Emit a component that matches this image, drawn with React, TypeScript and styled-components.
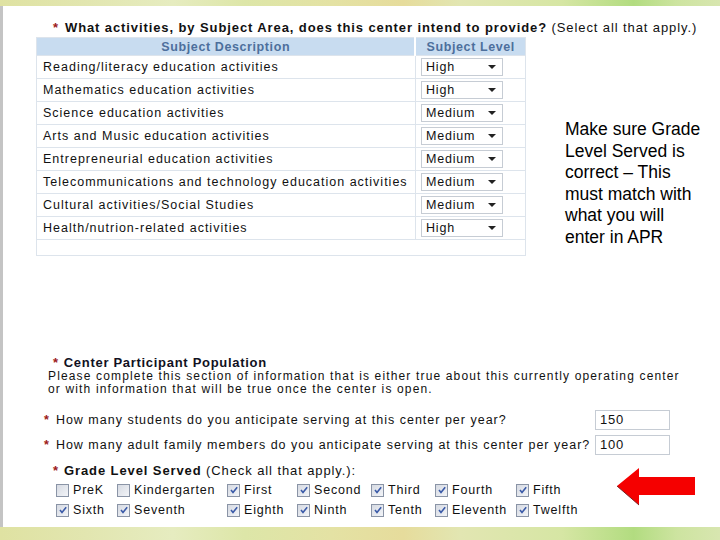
import styled, { createGlobalStyle } from "styled-components";

const GlobalStyle = createGlobalStyle`
  html, body {
    margin: 0;
    padding: 0;
    background: #ffffff;
  }
  body {
    font-family: "Liberation Sans", Arial, sans-serif;
  }
`;

const Slide = styled.div`
  width: 720px;
  height: 540px;
  display: flex;
  flex-direction: column;
  overflow: hidden;
  background: #ffffff;
`;

const Band = styled.div<{ $h: number }>`
  height: ${(p) => p.$h}px;
  flex-shrink: 0;
  background: linear-gradient(
    90deg,
    #dfe2a2 0%,
    #e2e6b0 12%,
    #e6ecc0 24%,
    #dde6a8 34%,
    #e4e2a4 46%,
    #e6dc9c 56%,
    #e2e6b2 64%,
    #d6e6a4 78%,
    #b2dc80 88%,
    #cde4a0 94%,
    #d8e6b0 100%
  );
`;

const Page = styled.div`
  flex: 1;
  border-left: 3px solid #c4c4c4;
  display: flex;
  flex-direction: column;
  color: #111111;
`;

const Star = styled.span<{ $gap?: number }>`
  color: #9c1a1a;
  font-weight: 700;
  margin-right: ${(p) => p.$gap ?? 5}px;
`;

const Question = styled.div`
  margin: 14px 0 0 50px;
  font-size: 13px;
  letter-spacing: 0.9px;
  white-space: nowrap;
  line-height: 15px;
`;

const Strong = styled.b`
  font-weight: 700;
`;

const UpperRow = styled.div`
  display: flex;
  align-items: flex-start;
  margin-top: 2px;
`;

const SubjectTable = styled.table`
  margin-left: 33px;
  width: 490px;
  border-collapse: collapse;
  border: 1px solid #dde4ec;
  font-size: 12.5px;
  letter-spacing: 1px;
`;

const HeadCell = styled.th<{ $w: number }>`
  width: ${(p) => p.$w}px;
  height: 17px;
  padding: 0;
  background: #c8dcf0;
  color: #4d6f9c;
  font-weight: 700;
  font-size: 12.5px;
  letter-spacing: 0.6px;
  text-align: center;
  border-left: ${(p) => (p.$w < 200 ? "2px solid #ffffff" : "none")};
`;

const Cell = styled.td<{ $level?: boolean }>`
  height: 22px;
  padding: 0 0 0 ${(p) => (p.$level ? "5px" : "6px")};
  border-top: 1px solid #dde4ec;
  border-left: ${(p) => (p.$level ? "1px solid #dde4ec" : "none")};
  white-space: nowrap;
`;

const EmptyCell = styled.td`
  height: 13px;
  border-top: 1px solid #dde4ec;
`;

const SelectBox = styled.div`
  width: 82px;
  height: 18px;
  box-sizing: border-box;
  border: 1px solid #c6ccd4;
  background: #ffffff;
  display: flex;
  align-items: center;
  justify-content: space-between;
  padding: 0 6px 0 4px;
  font-size: 12.5px;
  letter-spacing: 0.8px;
`;

const Caret = styled.span`
  width: 0;
  height: 0;
  border-left: 4px solid transparent;
  border-right: 4px solid transparent;
  border-top: 4px solid #222222;
`;

const Note = styled.div`
  margin: 82px 0 0 39px;
  width: 140px;
  font-size: 17.5px;
  line-height: 21.6px;
  color: #000000;
`;

const Population = styled.div`
  margin-top: 100px;
  display: flex;
  flex-direction: column;
`;

const SectionTitle = styled.div`
  margin-left: 50px;
  font-size: 13px;
  font-weight: 700;
  letter-spacing: 0.7px;
  line-height: 14px;
  color: #111122;
`;

const Paragraph = styled.div`
  margin-left: 45px;
  font-size: 12px;
  letter-spacing: 1.15px;
  line-height: 13px;
  white-space: nowrap;
`;

const AskRow = styled.div<{ $top: number }>`
  margin: ${(p) => p.$top}px 0 0 41px;
  display: flex;
  align-items: center;
  height: 21px;
  font-size: 12.5px;
  letter-spacing: 1px;
`;

const AskText = styled.div`
  width: 551px;
  white-space: nowrap;
`;

const NumberBox = styled.div`
  width: 75px;
  height: 20px;
  box-sizing: border-box;
  border: 1px solid #c6ccd4;
  padding: 1px 0 0 4px;
  font-size: 13px;
  letter-spacing: 0.8px;
`;

const GradeBlock = styled.div`
  display: flex;
  align-items: flex-start;
  margin-top: 8px;
`;

const GradeLeft = styled.div`
  display: flex;
  flex-direction: column;
`;

const GradeTitle = styled.div`
  margin-left: 50px;
  font-size: 13px;
  letter-spacing: 0.9px;
  line-height: 15px;
`;

const GradeGrid = styled.div`
  margin: 2px 0 0 53px;
  display: grid;
  grid-template-columns: 61px 110px 70px 74px 64px 81px 70px;
  grid-auto-rows: 20px;
  align-items: center;
  font-size: 12.5px;
  letter-spacing: 0.8px;
`;

const Choice = styled.label`
  display: flex;
  align-items: center;
  gap: 4px;
  white-space: nowrap;
`;

const Box = styled.span`
  width: 13px;
  height: 13px;
  box-sizing: border-box;
  border: 1px solid #8a94a6;
  background: linear-gradient(135deg, #d6dae2, #f2f4f8);
  display: inline-flex;
  align-items: center;
  justify-content: center;
`;

const Arrow = styled.svg`
  margin: 4px 0 0 31px;
`;

const subjects: [string, string][] = [
  ["Reading/literacy education activities", "High"],
  ["Mathematics education activities", "High"],
  ["Science education activities", "Medium"],
  ["Arts and Music education activities", "Medium"],
  ["Entrepreneurial education activities", "Medium"],
  ["Telecommunications and technology education activities", "Medium"],
  ["Cultural activities/Social Studies", "Medium"],
  ["Health/nutrion-related activities", "High"],
];

const grades: [string, boolean][] = [
  ["PreK", false],
  ["Kindergarten", false],
  ["First", true],
  ["Second", true],
  ["Third", true],
  ["Fourth", true],
  ["Fifth", true],
  ["Sixth", true],
  ["Seventh", true],
  ["Eighth", true],
  ["Ninth", true],
  ["Tenth", true],
  ["Eleventh", true],
  ["Twelfth", true],
];

const Check = ({ on }: { on: boolean }) => (
  <Box>
    {on && (
      <svg width="10" height="10" viewBox="0 0 10 10">
        <path d="M2 5 L4 7.5 L8.2 2.2" fill="none" stroke="#3a5aa8" strokeWidth="1.6" />
      </svg>
    )}
  </Box>
);

export default function App() {
  return (
    <>
      <GlobalStyle />
      <Slide>
        <Band $h={6} />
        <Page>
          <Question>
            <Star $gap={6}>*</Star>
            <Strong>What activities, by Subject Area, does this center intend to provide?</Strong> (Select all that apply.)
          </Question>

          <UpperRow>
            <SubjectTable>
              <thead>
                <tr>
                  <HeadCell $w={378}>Subject Description</HeadCell>
                  <HeadCell $w={110}>Subject Level</HeadCell>
                </tr>
              </thead>
              <tbody>
                {subjects.map(([name, level]) => (
                  <tr key={name}>
                    <Cell>{name}</Cell>
                    <Cell $level>
                      <SelectBox>
                        {level}
                        <Caret />
                      </SelectBox>
                    </Cell>
                  </tr>
                ))}
                <tr>
                  <EmptyCell colSpan={2} />
                </tr>
              </tbody>
            </SubjectTable>
            <Note>Make sure Grade Level Served is correct – This must match with what you will enter in APR</Note>
          </UpperRow>

          <Population>
            <SectionTitle>
              <Star>*</Star>Center Participant Population
            </SectionTitle>
            <Paragraph>
              Please complete this section of information that is either true about this currently operating center
              <br />
              or with information that will be true once the center is open.
            </Paragraph>
            <AskRow $top={13}>
              <AskText>
                <Star $gap={6}>*</Star>How many students do you anticipate serving at this center per year?
              </AskText>
              <NumberBox>150</NumberBox>
            </AskRow>
            <AskRow $top={4}>
              <AskText>
                <Star $gap={6}>*</Star>How many adult family members do you anticipate serving at this center per year?
              </AskText>
              <NumberBox>100</NumberBox>
            </AskRow>
          </Population>

          <GradeBlock>
            <GradeLeft>
              <GradeTitle>
                <Star>*</Star>
                <Strong>Grade Level Served</Strong> (Check all that apply.):
              </GradeTitle>
              <GradeGrid>
                {grades.map(([g, on]) => (
                  <Choice key={g}>
                    <Check on={on} />
                    {g}
                  </Choice>
                ))}
              </GradeGrid>
            </GradeLeft>
            <Arrow width="80" height="40" viewBox="0 0 80 40">
              <polygon points="0,19 22,1 22,10 78,10 78,28 22,28 22,38" fill="#f50000" />
              <polyline points="0,19 22,38" fill="none" stroke="#7a2020" strokeWidth="1" />
            </Arrow>
          </GradeBlock>
        </Page>
        <Band $h={13} />
      </Slide>
    </>
  );
}
